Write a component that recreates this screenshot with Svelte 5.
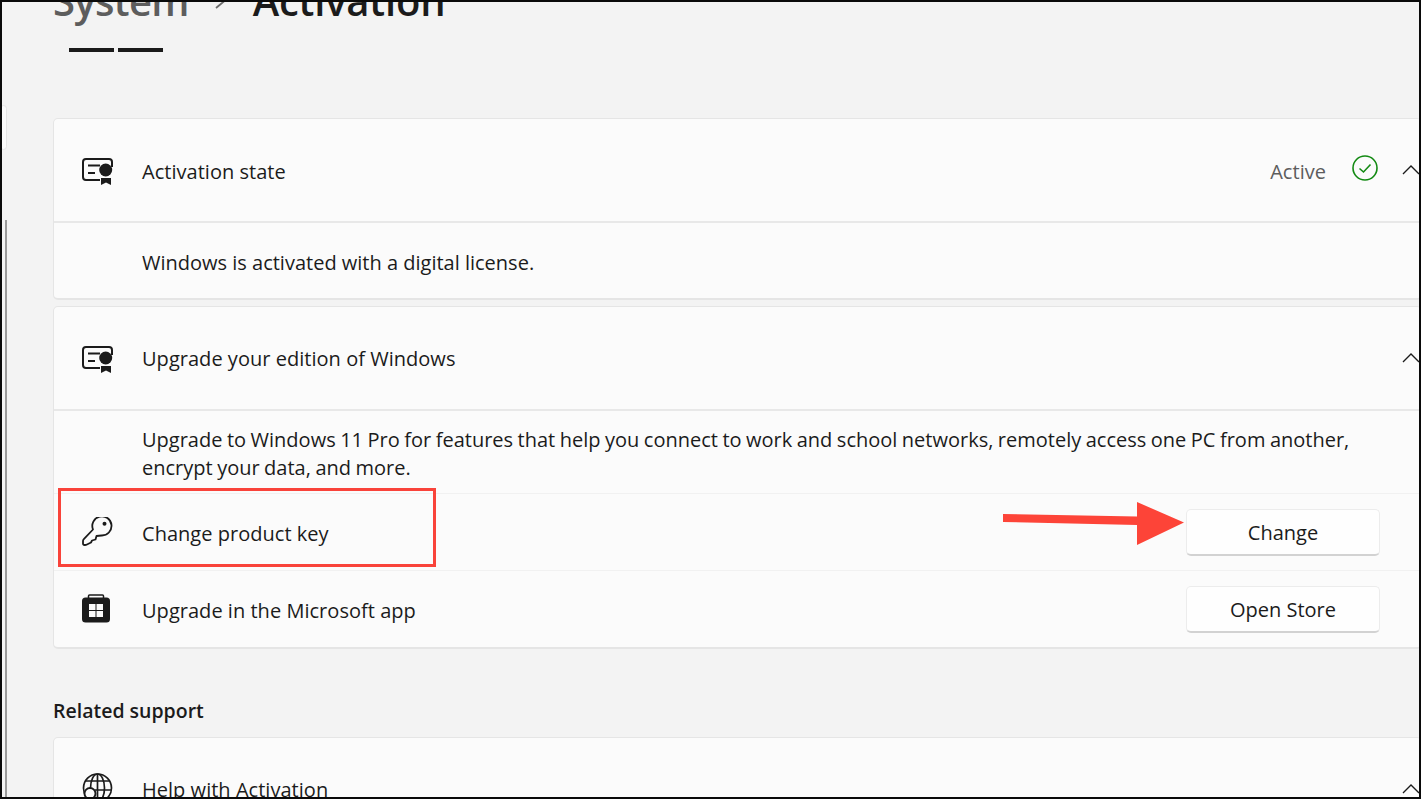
<script>
	// same certificate glyph is used on two rows
	const certRect = "M18 25 H4 A3 3 0 0 1 1 22 V7 A3 3 0 0 1 4 4 H27 A3 3 0 0 1 30 7 V12";
</script>

<div class="frame">
	<div class="nav-pill"></div>
	<div class="nav-scroll"></div>

	<main>
		<h1><span class="crumb">System</span><svg class="sep" viewBox="0 0 14 14" width="14" height="14"><path d="M1 13 L13 3" fill="none" stroke="#6a6a6a" stroke-width="1.800"/></svg><span>Activation</span></h1>
		<div class="dashes"><i></i><i></i></div>

		<section class="card first">
			<div class="row head">
				<svg class="icon" viewBox="0 0 32 30" width="32" height="30">
					<path d={certRect} fill="none" stroke="#1b1b1b" stroke-width="2"/>
					<path d="M6 10.500 H18 M6 18 H13" stroke="#1b1b1b" stroke-width="2"/>
					<circle cx="23.700" cy="15" r="6.500" fill="#1b1b1b"/>
					<path d="M19 23 H29 V30 L24 27.500 L19 30 Z" fill="#1b1b1b"/>
				</svg>
				<span class="label">Activation state</span>
				<span class="status">Active</span>
				<svg class="check" viewBox="0 0 26 26" width="26" height="26">
					<circle cx="13" cy="13" r="12" fill="none" stroke="#138a13" stroke-width="1.600"/>
					<path d="M7.500 13.500 L11.500 17 L18.500 9.500" fill="none" stroke="#138a13" stroke-width="1.600"/>
				</svg>
				<svg class="chev" viewBox="0 0 18 10" width="18" height="10"><path d="M1 9 L9 1 L17 9" fill="none" stroke="#1b1b1b" stroke-width="1.300"/></svg>
			</div>
			<div class="body short">Windows is activated with a digital license.</div>
		</section>

		<section class="card">
			<div class="row head">
				<svg class="icon" viewBox="0 0 32 30" width="32" height="30">
					<path d={certRect} fill="none" stroke="#1b1b1b" stroke-width="2"/>
					<path d="M6 10.500 H18 M6 18 H13" stroke="#1b1b1b" stroke-width="2"/>
					<circle cx="23.700" cy="15" r="6.500" fill="#1b1b1b"/>
					<path d="M19 23 H29 V30 L24 27.500 L19 30 Z" fill="#1b1b1b"/>
				</svg>
				<span class="label">Upgrade your edition of Windows</span>
				<svg class="chev" viewBox="0 0 18 10" width="18" height="10"><path d="M1 9 L9 1 L17 9" fill="none" stroke="#1b1b1b" stroke-width="1.300"/></svg>
			</div>
			<div class="body long">Upgrade to Windows 11 Pro for features that help you connect to work and school networks, remotely access one PC from another, encrypt your data, and more.</div>
			<div class="row sub">
				<svg class="icon" viewBox="0 0 32 30" width="32" height="30">
					<path d="M11 12.500 A9.600 9.600 0 1 1 19.500 18.500 L14.500 19 L13.500 22.500 L10 23.500 L9 25.500 L5 27.500 Q4 28 3 28 H2.500 Q1 28 1 26.500 V24 Q1 23 1.800 22.200 Z" fill="none" stroke="#1b1b1b" stroke-width="1.800" stroke-linejoin="round"/>
					<circle cx="22.500" cy="6.700" r="2" fill="#1b1b1b"/>
				</svg>
				<span class="label">Change product key</span>
				<button>Change</button>
			</div>
			<div class="row sub">
				<svg class="icon" viewBox="0 0 32 30" width="32" height="30">
					<path d="M6.500 4 V2 Q6.500 1 7.500 1 H20.500 Q21.500 1 21.500 2 V4" fill="none" stroke="#1b1b1b" stroke-width="1.500"/>
					<rect x="0" y="3.500" width="28" height="25" rx="3.500" fill="#1b1b1b"/>
					<path d="M7 10 H13.500 V16 H7 Z M14.500 10 H21 V16 H14.500 Z M7 17 H13.500 V23 H7 Z M14.500 17 H21 V23 H14.500 Z" fill="#fbfbfb"/>
				</svg>
				<span class="label">Upgrade in the Microsoft app</span>
				<button>Open Store</button>
			</div>
		</section>

		<h2>Related support</h2>

		<section class="card">
			<div class="row head">
				<svg class="icon globe" viewBox="0 0 32 30" width="32" height="30">
					<g fill="none" stroke="#1b1b1b" stroke-width="1.700">
						<circle cx="15.500" cy="15" r="14"/>
						<ellipse cx="15.500" cy="15" rx="7" ry="14"/>
						<path d="M3 8 H28 M13 17 H30 M15.500 1 V29"/>
					</g>
					<circle cx="8" cy="20.500" r="5.500" fill="#fbfbfb" stroke="#1b1b1b" stroke-width="1.900"/>
				</svg>
				<span class="label">Help with Activation</span>
				<svg class="chev" viewBox="0 0 18 10" width="18" height="10"><path d="M1 9 L9 1 L17 9" fill="none" stroke="#1b1b1b" stroke-width="1.300"/></svg>
			</div>
		</section>
	</main>

	<div class="callout"></div>
	<svg class="arrow" viewBox="0 0 190 44" width="190" height="44">
		<path d="M0 12 L134 14.500 L134 0 L181 20.500 L134 43 L134 23 L0 20 Z" fill="#fd4438"/>
	</svg>
</div>

<style>
	:global(body) {
		margin: 0;
		background: #000;
	}

	.frame {
		position: relative;
		box-sizing: border-box;
		width: 1421px;
		height: 799px;
		border: 2px solid #0a0a0a;
		background: #f3f3f3;
		overflow: hidden;
		font-family: "Open Sans", "Noto Sans", sans-serif;
		color: #1b1b1b;
	}

	main {
		width: 1369px;
		margin-left: 51px;
	}

	h1 {
		display: flex;
		align-items: center;
		height: 38px;
		margin: -20px 0 0;
		font-size: 40px;
		font-weight: 600;
		line-height: 38px;
		letter-spacing: -0.2px;
	}

	.crumb {
		color: #5d5d5d;
		letter-spacing: -0.7px;
	}

	.sep {
		flex: none;
		margin: 0 24px 0 26px;
		position: relative;
		top: 1px;
	}

	.dashes {
		display: flex;
		gap: 4px;
		margin: 28px 0 0 16px;
	}

	.dashes i {
		display: block;
		width: 45px;
		height: 4px;
		background: #1a1a1a;
	}

	.card {
		border: 1px solid #e5e5e5;
		border-bottom-width: 2px;
		border-radius: 5px;
		background: #fbfbfb;
		margin-top: 6px;
	}

	.card.first {
		margin-top: 66px;
	}

	.row {
		display: flex;
		align-items: center;
		padding-left: 28px;
		font-size: 20px;
		letter-spacing: 0.03px;
	}

	.head {
		height: 102px;
	}

	.sub {
		height: 76px;
		border-top: 1px solid #f1f1f1;
	}

	.icon {
		flex: none;
		margin-right: 28px;
	}

	.globe {
		margin-top: -2px;
	}

	.label {
		flex: 1;
	}

	.first .label,
	.sub .label,
	.status,
	button {
		padding-top: 2px;
	}

	.status {
		color: #5d5d5d;
		margin-right: 26px;
	}

	.check {
		margin-top: -4px;
		margin-right: 24px;
	}

	.chev {
		margin-right: 1px;
		margin-top: -1px;
	}

	.body {
		box-sizing: border-box;
		border-top: 2px solid #e8e8e8;
		padding-left: 88px;
		font-size: 20px;
		line-height: 28px;
	}

	.body.short {
		height: 77px;
		padding-top: 26px;
	}

	.body.long {
		height: 84px;
		padding-top: 15px;
		padding-right: 60px;
		word-spacing: -0.7px;
	}

	button {
		box-sizing: border-box;
		width: 194px;
		height: 47px;
		margin-right: 41px;
		border: 1px solid #ececec;
		border-bottom: 2px solid #d2d2d2;
		border-radius: 5px;
		background: #fefefe;
		color: #1b1b1b;
		font: inherit;
	}

	h2 {
		margin: 48px 0 0;
		font-size: 19.5px;
		font-weight: 600;
		line-height: 27px;
	}

	h2 + .card {
		margin-top: 13px;
	}

	.nav-pill {
		position: absolute;
		left: -2px;
		top: 103px;
		width: 5px;
		height: 43px;
		background: #fbfbfb;
		border: 1px solid #e5e5e5;
		border-radius: 4px;
	}

	.nav-scroll {
		position: absolute;
		left: 3px;
		top: 218px;
		bottom: 0;
		width: 2px;
		background: #9a9a9a;
	}

	.callout {
		position: absolute;
		left: 56px;
		top: 486px;
		width: 378px;
		height: 79px;
		box-sizing: border-box;
		border: 3px solid #f9433a;
	}

	.arrow {
		position: absolute;
		left: 1001px;
		top: 500px;
	}
</style>
